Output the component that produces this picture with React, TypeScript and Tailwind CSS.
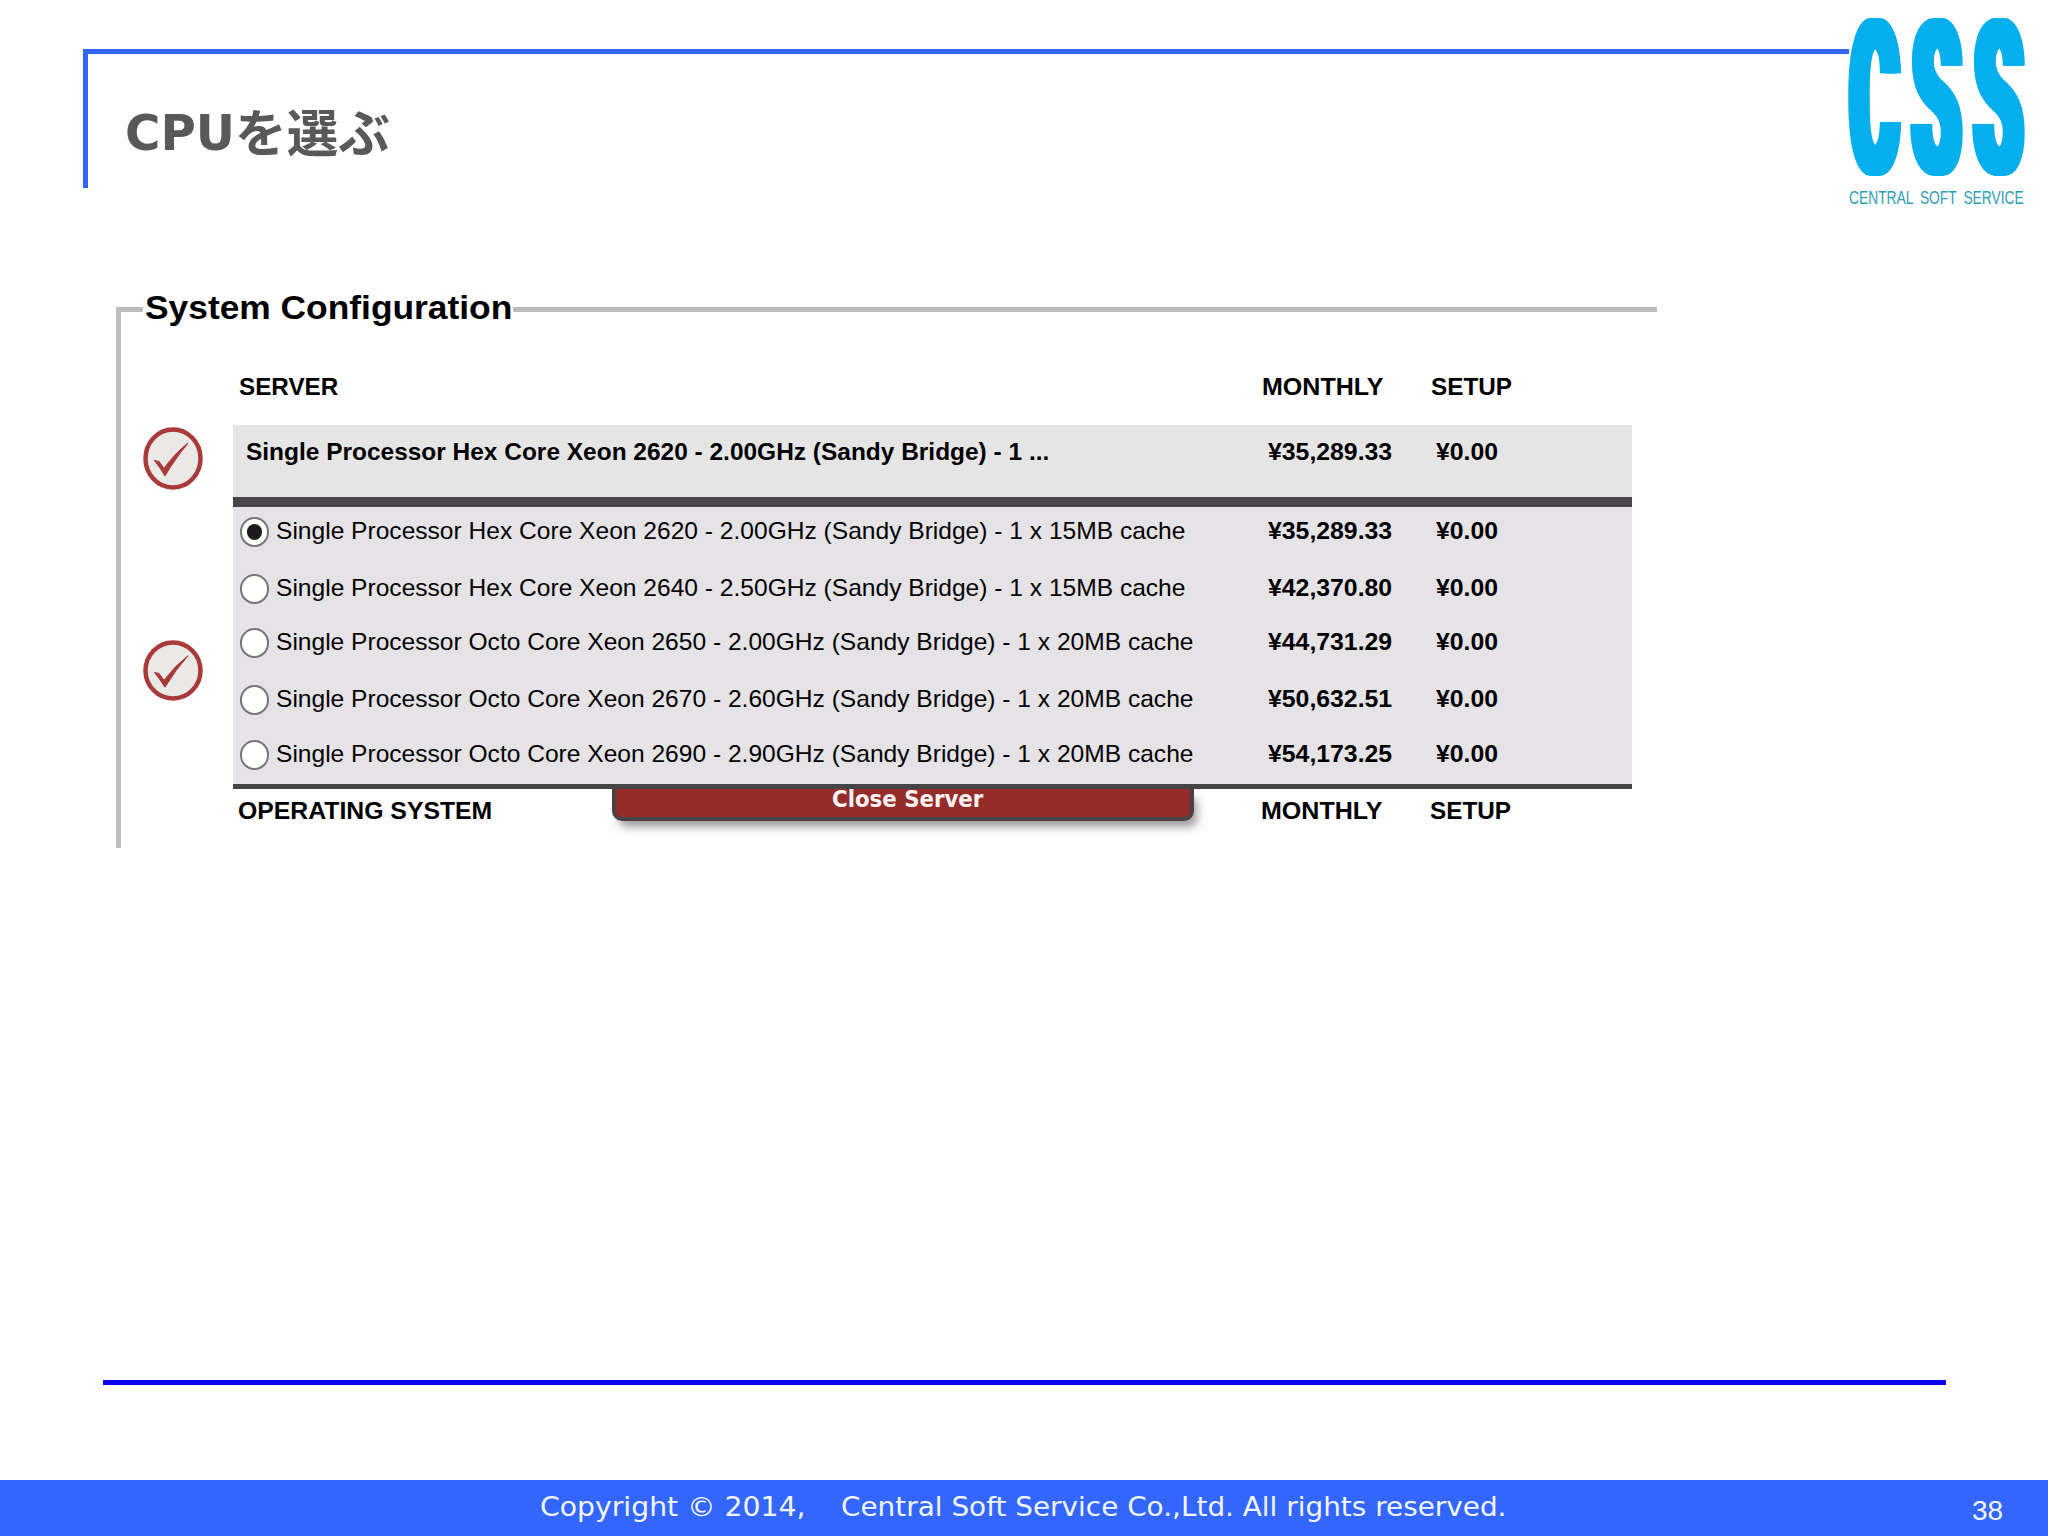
import React, { useLayoutEffect, useRef, useState } from "react";

const arial = "font-['Liberation_Sans',Arial,sans-serif]";

/** A line of text whose glyphs are stretched horizontally to fill `width` pixels. */
function Fit({ width, className = "", children }: { width: number; className?: string; children: React.ReactNode }) {
  const ref = useRef<HTMLSpanElement>(null);
  const [scale, setScale] = useState(1);
  useLayoutEffect(() => {
    if (ref.current) setScale(width / ref.current.offsetWidth);
  }, [width]);
  return (
    <span className="block shrink-0 whitespace-nowrap" style={{ width }}>
      <span ref={ref} className={`inline-block origin-left align-top ${className}`} style={{ transform: `scaleX(${scale})` }}>
        {children}
      </span>
    </span>
  );
}

function LogoLetter({ children }: { children: string }) {
  return (
    <Fit
      width={49}
      className="font-['Roboto',sans-serif] text-[216px] leading-[163px] font-black text-[#05aeec] [text-shadow:-12px_0_0_#05aeec,-6px_0_0_#05aeec,6px_0_0_#05aeec,12px_0_0_#05aeec]"
    >
      {children}
    </Fit>
  );
}

function Logo() {
  return (
    <div className="mt-[19px] flex h-[186px] w-[175px] flex-col font-['Liberation_Sans',Arial,sans-serif]">
      <div className="flex h-[157px] gap-[13px] pl-px">
        <LogoLetter>C</LogoLetter>
        <LogoLetter>S</LogoLetter>
        <LogoLetter>S</LogoLetter>
      </div>
      <div className="mt-[13px]">
        <Fit width={175} className="text-[18px] leading-[18px] text-[#2f9cb8] [word-spacing:4px]">CENTRAL SOFT SERVICE</Fit>
      </div>
    </div>
  );
}

function Check({ className }: { className: string }) {
  return (
    <svg viewBox="0 0 60 62" preserveAspectRatio="none" className={`block w-[60px] ${className}`}>
      <ellipse cx="30" cy="31" rx="27.5" ry="28.5" fill="#ebe9e8" stroke="#a93a3a" strokeWidth="4.5" />
      <path d="M11.5 33 L16 34 L21 41 Q32 26 45 16 Q33 30 22 48 Q17 40 11.5 33 Z" fill="#a93a3a" stroke="#a93a3a" strokeWidth="1" />
    </svg>
  );
}

function Radio({ checked }: { checked?: boolean }) {
  return (
    <span className="flex h-[30px] w-[29px] shrink-0 items-center justify-center rounded-full border-2 border-[#77757a] bg-white">
      {checked && <span className="h-[16px] w-[15px] rounded-full bg-[#1d1b1e]" />}
    </span>
  );
}

function Heading({ label, width, pad }: { label: string; width: number; pad: string }) {
  return (
    <div className={`flex ${pad}`}>
      <div className="w-[1023px] shrink-0">
        <Fit width={width} className="text-[24px] leading-[24px] font-bold">{label}</Fit>
      </div>
      <div className="w-[169px] shrink-0">
        <Fit width={121} className="text-[24px] leading-[24px] font-bold">MONTHLY</Fit>
      </div>
      <Fit width={81} className="text-[24px] leading-[24px] font-bold">SETUP</Fit>
    </div>
  );
}

function Prices({ monthly }: { monthly: string }) {
  return (
    <>
      <div className="w-[168px] shrink-0">
        <Fit width={124} className="text-[24px] leading-[24px] font-bold">{monthly}</Fit>
      </div>
      <Fit width={62} className="text-[24px] leading-[24px] font-bold">¥0.00</Fit>
    </>
  );
}

const options = [
  { name: "Single Processor Hex Core Xeon 2620 - 2.00GHz (Sandy Bridge) - 1 x 15MB cache", price: "¥35,289.33", width: 909, height: "h-[57px]" },
  { name: "Single Processor Hex Core Xeon 2640 - 2.50GHz (Sandy Bridge) - 1 x 15MB cache", price: "¥42,370.80", width: 909, height: "h-[54px]" },
  { name: "Single Processor Octo Core Xeon 2650 - 2.00GHz (Sandy Bridge) - 1 x 20MB cache", price: "¥44,731.29", width: 917, height: "h-[57px]" },
  { name: "Single Processor Octo Core Xeon 2670 - 2.60GHz (Sandy Bridge) - 1 x 20MB cache", price: "¥50,632.51", width: 917, height: "h-[55px]" },
  { name: "Single Processor Octo Core Xeon 2690 - 2.90GHz (Sandy Bridge) - 1 x 20MB cache", price: "¥54,173.25", width: 917, height: "h-[44px]" },
];

export default function App() {
  return (
    <div className="flex h-[1536px] w-[2048px] flex-col overflow-hidden bg-[#fefefe]">
      <header className="flex h-[292px] shrink-0 items-start pl-[83px]">
        <div className="mt-[49px] h-[139px] w-[1766px] border-t-5 border-l-5 border-[#3366f5] pt-[44px] pl-[37px]">
          <h1 className="flex text-[51px] leading-[64px] font-bold text-[#595959]">
            <Fit width={110} className="pt-[3px] font-['DejaVu_Sans',sans-serif] text-[50px]">CPU</Fit>
            <Fit width={155} className="font-['Noto_Sans_CJK_JP',sans-serif]">を選ぶ</Fit>
          </h1>
        </div>
        <Logo />
      </header>

      <section className={`ml-[116px] flex h-[556px] w-[1541px] shrink-0 flex-col text-black ${arial}`}>
        <div className="flex h-[32px] shrink-0">
          <div className="mt-[15px] w-[27px] border-t-5 border-l-5 border-t-[#bdbdbd] border-l-[#bdbdbd]" />
          <div className="w-[370px] pl-[2px]">
            <Fit width={367} className="text-[34px] leading-[30px] font-bold">System Configuration</Fit>
          </div>
          <div className="mt-[15px] h-[5px] flex-1 bg-[#bdbdbd]" />
        </div>
        <div className="flex flex-1 border-l-5 border-[#bdbdbd]">
          <div className="flex w-[112px] flex-col pt-[103px] pl-[22px]">
            <Check className="h-[63px]" />
            <Check className="mt-[150px] h-[61px]" />
          </div>
          <div className="flex w-[1399px] flex-col">
            <Heading label="SERVER" width={99} pad="h-[101px] pt-[51px] pl-[6px]" />
            <div className="flex h-[72px] bg-[#e5e5e6] pt-[15px] pl-[13px]">
              <div className="w-[1022px] shrink-0">
                <Fit width={803} className="text-[24px] leading-[24px] font-bold">
                  Single Processor Hex Core Xeon 2620 - 2.00GHz (Sandy Bridge) - 1 ...
                </Fit>
              </div>
              <Prices monthly="¥35,289.33" />
            </div>
            <div className="h-[10px] bg-[#474548]" />
            <div className="flex h-[277px] flex-col bg-[#e5e3e6] pt-[10px]">
              {options.map((o, i) => (
                <div key={o.name} className={`flex shrink-0 items-start pl-[7px] ${o.height}`}>
                  <Radio checked={i === 0} />
                  <div className="mt-[2px] flex">
                    <div className="w-[999px] shrink-0 pl-[7px]">
                      <Fit width={o.width} className="text-[24px] leading-[24px]">{o.name}</Fit>
                    </div>
                    <Prices monthly={o.price} />
                  </div>
                </div>
              ))}
            </div>
            <div className="h-[5px] bg-[#454346]" />
            <div className="relative flex">
              <Heading label="OPERATING SYSTEM" width={254} pad="pt-[10px] pl-[5px]" />
              <div className="absolute top-0 left-[379px] flex h-[32px] w-[582px] justify-center rounded-b-[10px] border-x-4 border-b-4 border-[#4a4346] bg-[#942c2a] pl-[9px] shadow-[5px_8px_9px_-2px_rgba(70,60,70,0.5)]">
                <Fit width={151} className="font-['DejaVu_Sans',sans-serif] text-[23px] leading-[20px] font-bold text-[#fdf3f2]">Close Server</Fit>
              </div>
            </div>
          </div>
        </div>
      </section>

      <div className="mt-[532px] ml-[103px] h-[5px] w-[1843px] shrink-0 bg-[#0a06ee]" />

      <footer className="mt-[95px] flex h-[56px] shrink-0 bg-[#3366ff] pl-[540px] text-[28px] text-[#f2f6ff]">
        <div className="flex w-[1432px] shrink-0 pt-[7px] font-['DejaVu_Sans',sans-serif] text-[27px] leading-[40px]">
          <div className="w-[301px]">
            <Fit width={265}>Copyright © 2014,</Fit>
          </div>
          <Fit width={665}>Central Soft Service Co.,Ltd. All rights reserved.</Fit>
        </div>
        <div className={`pt-[15px] leading-[32px] ${arial}`}>38</div>
      </footer>
    </div>
  );
}
